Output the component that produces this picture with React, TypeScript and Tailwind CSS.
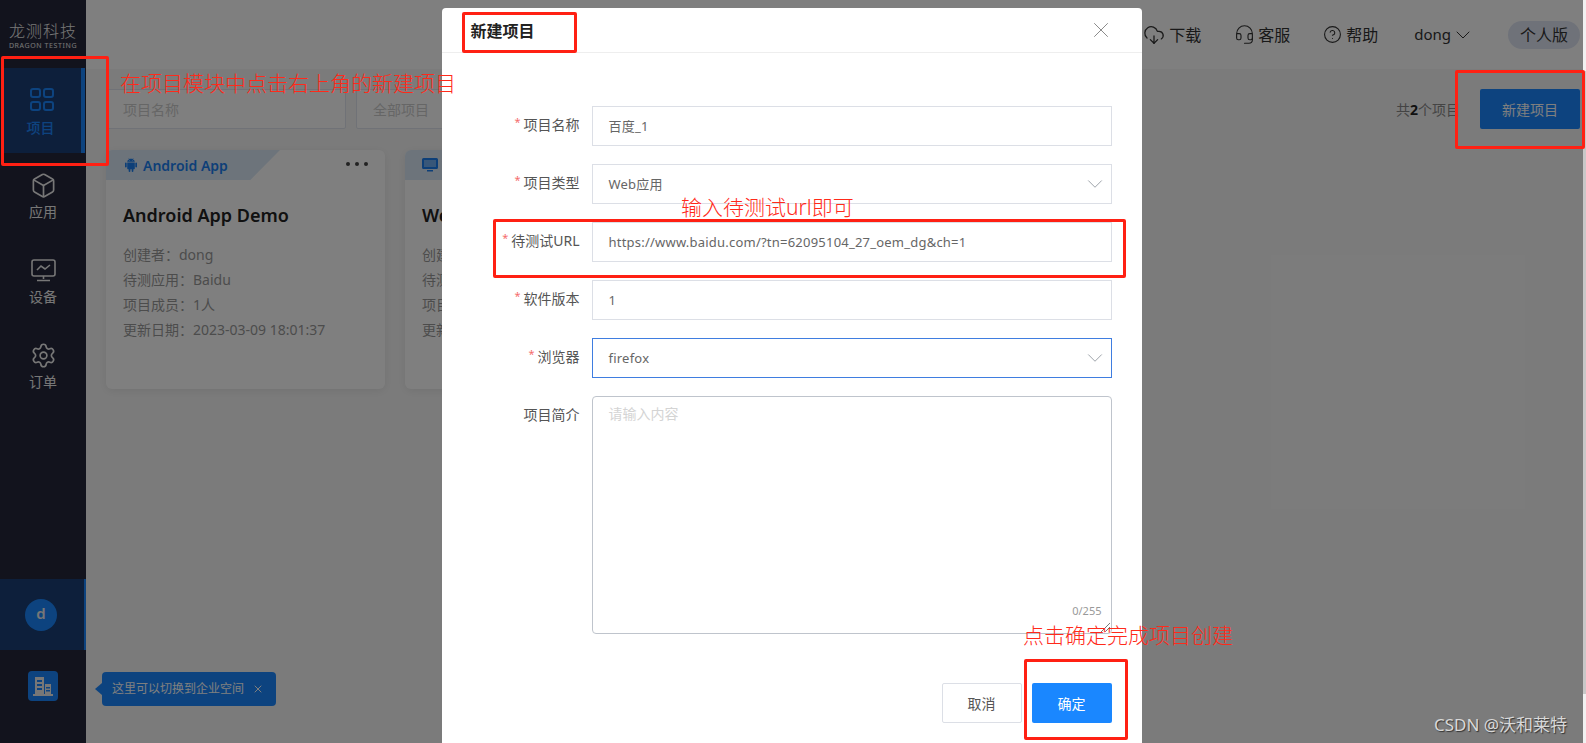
import React from "react";
import { Box, ChevronDown, CircleHelp, CloudDownload, Headset, Settings, X } from "lucide-react";
import { AiFillAndroid } from "react-icons/ai";

const NavItem = ({ icon, label }: { icon: React.ReactNode; label: string }) => (
  <div className="h-[85px] flex flex-col items-center justify-start pt-[19px] text-[#eeeeee]">
    <div className="h-[26px] flex items-center">{icon}</div>
    <span className="text-[14px] leading-[20px] mt-[4px]">{label}</span>
  </div>
);

const Sidebar = () => (
  <aside className="w-[86px] shrink-0 bg-[#24263a] flex flex-col text-[#eeeeee]">
    <div className="h-[68px] flex flex-col items-center pt-[22px]">
      <span className="text-[16px] leading-[19px] tracking-[1px] font-light">龙测科技</span>
      <span className="text-[7px] leading-[9px] tracking-[0.6px] whitespace-nowrap">DRAGON TESTING</span>
    </div>
    <div className="h-[85px] ml-[2px] mr-px bg-[#1a3f76] border-r-[4px] border-[#1a87ff] flex flex-col items-center pt-[19px] text-[#1a87ff]">
      <svg width="26" height="25" viewBox="0 0 26 25" fill="none" stroke="currentColor" strokeWidth="2">
        <rect x="2" y="2" width="9" height="8" rx="2" />
        <rect x="15" y="2" width="9" height="8" rx="2" />
        <rect x="2" y="15" width="9" height="8" rx="2" />
        <rect x="15" y="15" width="9" height="8" rx="2" />
      </svg>
      <span className="text-[14px] leading-[20px] mt-[6px] font-medium mr-[2px]">项目</span>
    </div>
    <NavItem icon={<Box size={27} strokeWidth={1.5} />} label="应用" />
    <NavItem
      icon={
        <svg width="25" height="23" viewBox="0 0 25 23" fill="none" stroke="currentColor" strokeWidth="1.6">
          <rect x="1" y="1" width="23" height="16" rx="2" />
          <path d="M6 11l4-4 4 3 5-4" />
          <path d="M12.5 17v3M6 21.5h13" />
        </svg>
      }
      label="设备"
    />
    <NavItem icon={<Settings size={27} strokeWidth={1.5} />} label="订单" />
    <div className="flex-1" />
    <div className="h-[71px] bg-[#1a3f76] border-r-[2px] border-[#1a87ff] flex items-center justify-center mb-[21px]">
      <div className="w-8 h-8 rounded-full bg-[#1a87ff] flex items-center justify-center text-[15px] font-semibold pb-0.5 mr-[2px]">d</div>
    </div>
    <div className="h-[72px] flex justify-center">
      <div className="w-[30px] h-[30px] rounded bg-[#1a87ff] flex items-center justify-center">
        <svg width="20" height="20" viewBox="0 0 20 20" fill="currentColor">
          <path fillRule="evenodd" d="M2 1h9v17H2zM4 4v2h5V4zm0 4v2h5V8zm0 4v2h5v-2zM12 8h6v10h-6zm1 3v1.500h4V11zm0 3v1.500h4V14zM0 18h20v2H0z" />
        </svg>
      </div>
    </div>
  </aside>
);

const Header = () => (
  <header className="h-[69px] shrink-0 bg-white flex items-center justify-end text-[16px] text-[#333333]">
    <div className="flex items-center gap-[4px] mr-[33px]">
      <CloudDownload size={22} strokeWidth={1.4} />
      <span>下载</span>
    </div>
    <div className="flex items-center gap-[3px] mr-[33px]">
      <Headset size={21} strokeWidth={1.3} />
      <span>客服</span>
    </div>
    <div className="flex items-center gap-[4px] mr-[36px]">
      <CircleHelp size={19} strokeWidth={1.4} />
      <span>帮助</span>
    </div>
    <div className="flex items-center mr-[33px]">
      <span className="text-[15px]">dong</span>
      <ChevronDown size={24} strokeWidth={1} />
    </div>
    <div className="w-[72px] h-[28px] mr-[3px] rounded-full bg-[#dfe5f3] flex items-center justify-center">个人版</div>
  </header>
);

const ProjectCard = ({ tag, icon, title, lines, clipped }: { tag: string; icon: React.ReactNode; title: string; lines: string[]; clipped?: boolean }) => (
  <div className="w-[279px] h-[239px] shrink-0 bg-white rounded-[6px] shadow-[0_2px_10px_rgba(0,0,0,0.08)]">
    <div className="flex items-center justify-between pr-[17px]">
      <div className="w-[174px] h-[30px] bg-[#dbe9f7] rounded-tl-[6px] [clip-path:polygon(0_0,100%_0,83%_100%,0_100%)] flex items-center pl-[17px] gap-[4px] text-[#1a7ff0] text-[14px] font-semibold">
        {icon}
        <span>{tag}</span>
      </div>
      {!clipped && (
        <div className="flex gap-[5px] -mt-[3px]">
          <span className="w-[4px] h-[4px] rounded-full bg-[#444444]" />
          <span className="w-[4px] h-[4px] rounded-full bg-[#444444]" />
          <span className="w-[4px] h-[4px] rounded-full bg-[#444444]" />
        </div>
      )}
    </div>
    <h3 className="mt-[22px] px-[17px] text-[18px] leading-[26px] font-semibold text-[#222222]">{title}</h3>
    <div className="mt-[14px] px-[17px] text-[14px] leading-[25px] text-[#999999]">
      {lines.map((line) => (
        <p key={line}>{line}</p>
      ))}
    </div>
  </div>
);

const Content = () => (
  <main className="flex-1 bg-[#f7f7f7] pl-[20px] pr-[3px] pt-[20px] min-w-0">
    <div className="flex items-center h-[40px]">
      <div className="w-[240px] h-[40px] border border-[#e1e5ee] bg-white rounded-[2px] flex items-center pl-[16px] text-[14px] text-[#cccccc]">项目名称</div>
      <div className="ml-[10px] w-[240px] h-[40px] border border-[#e1e5ee] bg-white rounded-[2px] flex items-center pl-[16px] text-[14px] text-[#cccccc]">全部项目</div>
      <div className="flex-1" />
      <span className="text-[14px] text-[#888888]">
        共<b className="text-[#222222]">2</b>个项目
      </span>
      <div className="ml-[20px] w-[100px] h-[40px] rounded-[2px] bg-[#1a87ff] text-white text-[14px] flex items-center justify-center">新建项目</div>
    </div>
    <div className="flex gap-[20px] mt-[21px]">
      <ProjectCard
        tag="Android App"
        icon={<AiFillAndroid size={16} />}
        title="Android App Demo"
        lines={["创建者：dong", "待测应用：Baidu", "项目成员：1人", "更新日期：2023-03-09 18:01:37"]}
      />
      <ProjectCard
        tag="Web"
        icon={
          <svg width="16" height="16" viewBox="0 0 16 16" fill="currentColor">
            <path fillRule="evenodd" d="M1.500 1h13A1.500 1.500 0 0 1 16 2.500v8a1.500 1.500 0 0 1-1.500 1.500h-13A1.500 1.500 0 0 1 0 10.500v-8A1.500 1.500 0 0 1 1.500 1zM2 3v7h12V3zM5 13h6v1.500H5z" />
            <path d="M2 3h12v7H2z" opacity="0.55" />
          </svg>
        }
        title="Web Demo"
        clipped
        lines={["创建者：dong", "待测应用：Baidu", "项目成员：1人", "更新日期：2023-03-09 18:01:37"]}
      />
    </div>
  </main>
);

const Field = ({ label, value, required = true, select, focused }: { label: string; value: string; required?: boolean; select?: boolean; focused?: boolean }) => (
  <div className="flex gap-[12px] mb-[18px]">
    <label className="w-[138px] h-[36px] flex items-center justify-end text-[14px] text-[#555555]">
      {required && <span className="text-[#f56c6c] text-[11px] mr-[3px] -mt-[3px]">*</span>}
      {label}
    </label>
    <div
      className={`w-[520px] h-[40px] border flex items-center justify-between pl-[16px] pr-[3px] text-[13px] tracking-[0.22px] text-[#666666] ${
        focused ? "border-[#3f7de0]" : "border-[#dcdfe6]"
      }`}
    >
      <span className="pt-[1px]">{value}</span>
      {select && <ChevronDown size={26} strokeWidth={0.8} className="text-[#8f949c]" />}
    </div>
  </div>
);

const Modal = () => (
  <div className="absolute left-0 top-0 bottom-0 right-[3px] bg-black/50 flex justify-center items-start pt-2">
    <div className="w-[700px] h-[800px] bg-white rounded-[4px] shrink-0">
      <div className="h-[45px] border-b border-[#eeeeee] flex items-center justify-between pl-[29px] pr-[28px]">
        <h2 className="text-[16px] font-bold text-[#222222] pt-[2px]">新建项目</h2>
        <X size={26} strokeWidth={0.9} className="text-[#888888]" />
      </div>
      <div className="pt-[53px]">
        <Field label="项目名称" value="百度_1" />
        <Field label="项目类型" value="Web应用" select />
        <Field label="待测试URL" value="https://www.baidu.com/?tn=62095104_27_oem_dg&ch=1" />
        <Field label="软件版本" value="1" />
        <Field label="浏览器" value="firefox" select focused />
        <div className="flex gap-[12px]">
          <label className="w-[138px] h-[36px] flex items-center justify-end text-[14px] text-[#555555]">项目简介</label>
          <div className="w-[520px] h-[238px] border border-[#bfc4cc] rounded-[4px] relative px-[16px] py-[6px] text-[14px] text-[#d4d4d4]">
            请输入内容
            <span className="absolute right-[9px] bottom-[14px] text-[11px] text-[#999999]">0/255</span>
            <svg className="absolute right-0 bottom-0" width="12" height="12" viewBox="0 0 12 12" stroke="#777777" fill="none">
              <path d="M2 11L11 2M6 11l5-5" />
            </svg>
          </div>
        </div>
        <div className="flex justify-end gap-[10px] pr-[30px] mt-[49px]">
          <div className="w-[80px] h-[40px] border border-[#dcdfe6] rounded-[2px] flex items-center justify-center text-[14px] text-[#555555]">取消</div>
          <div className="w-[80px] h-[40px] bg-[#1a87ff] rounded-[2px] flex items-center justify-center text-[14px] text-white">确定</div>
        </div>
      </div>
    </div>
  </div>
);

const Tooltip = () => (
  <div className="absolute left-[102px] top-[672px] w-[174px] h-[34px] rounded bg-[#1a87ff] flex items-center justify-between pl-[10px] pr-[12px] text-[12px] whitespace-nowrap text-white">
    <span className="absolute -left-[7px] top-[11px] w-0 h-0 border-y-[6px] border-y-transparent border-r-[7px] border-r-[#1a87ff]" />
    <span>这里可以切换到企业空间</span>
    <X size={12} />
  </div>
);

const Annotations = () => (
  <>
    <div className="absolute left-[1px] top-[56px] w-[108px] h-[110px] border-[3px] border-[#ff2013] rounded-[2px]" />
    <div className="absolute left-[1455px] top-[70px] w-[130px] h-[79px] border-[3px] border-[#ff2013] rounded-[2px]" />
    <div className="absolute left-[462px] top-[12px] w-[115px] h-[41px] border-[3px] border-[#ff2013] rounded-[2px]" />
    <div className="absolute left-[493px] top-[219px] w-[633px] h-[59px] border-[3px] border-[#ff2013] rounded-[2px]" />
    <div className="absolute left-[1024px] top-[659px] w-[104px] h-[81px] border-[3px] border-[#ff2013] rounded-[2px]" />
    <span className="absolute left-[120px] top-[69px] text-[21px] leading-[28px] text-[#ff2a1a] font-light whitespace-nowrap">在项目模块中点击右上角的新建项目</span>
    <span className="absolute left-[681px] top-[193px] text-[21px] leading-[28px] text-[#ff2a1a] font-light whitespace-nowrap">输入待测试url即可</span>
    <span className="absolute left-[1023px] top-[621px] text-[21px] leading-[28px] text-[#ff2a1a] font-light whitespace-nowrap">点击确定完成项目创建</span>
    <span className="absolute left-[1434px] top-[713px] text-[17px] leading-[24px] text-[#d8d8d8] [text-shadow:1px_1px_1px_#333333] whitespace-nowrap">CSDN @沃和莱特</span>
  </>
);

export default function App() {
  return (
    <div className="relative h-[743px] w-[1586px] overflow-hidden flex font-['Noto_Sans','Noto_Sans_CJK_SC',sans-serif]">
      <Sidebar />
      <div className="flex-1 flex flex-col min-w-0">
        <Header />
        <Content />
      </div>
      <div className="w-[3px] shrink-0 bg-[#f1f1f1] pt-[71px]">
        <div className="h-[623px] bg-[#c8c8c8]" />
      </div>
      <Tooltip />
      <Modal />
      <Annotations />
    </div>
  );
}
